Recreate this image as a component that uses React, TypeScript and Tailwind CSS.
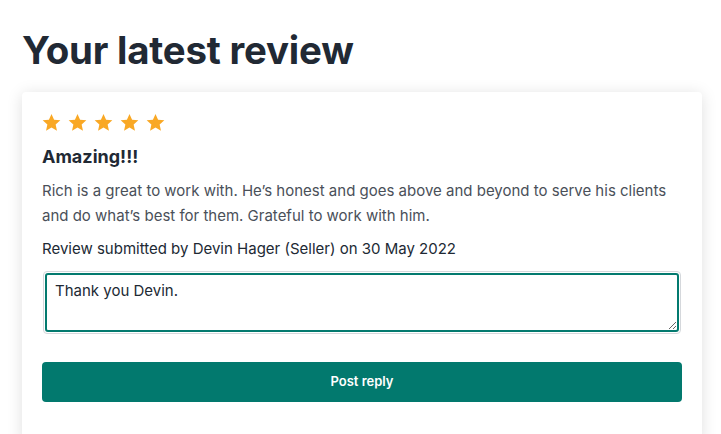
import React, { useState } from 'react';

const Star = () => (
  <svg viewBox="0 0 24 24" className="w-[21px] h-[21px]" fill="#f9a825">
    <path d="M12 2.2l2.95 6.55 7.15.72-5.37 4.8 1.52 7.03L12 17.7l-6.25 3.6 1.52-7.03-5.37-4.8 7.15-.72z" />
  </svg>
);

export default function App() {
  const [reply, setReply] = useState('Thank you Devin.');

  return (
    <div className="min-h-[434px] bg-white font-['Inter',sans-serif] text-[#212934] overflow-hidden">
      <h1 className="pl-[22px] pt-[27px] text-[38.4px] leading-[46px] font-bold tracking-[-0.2px]">
        Your latest review
      </h1>
      <div className="ml-[22px] mr-[19px] mt-[19px] bg-white rounded-[4px] shadow-[0_2px_16px_rgba(0,0,0,0.13)] px-[20px] pt-[20px] pb-[40px]">
        <div className="flex gap-[5px] -ml-[1px]">
          <Star />
          <Star />
          <Star />
          <Star />
          <Star />
        </div>
        <h2 className="mt-[12px] text-[18px] leading-[24px] font-bold">Amazing!!!</h2>
        <p className="mt-[9px] text-[15px] leading-[25px] text-[#4a5059]">
          Rich is a great to work with. He’s honest and goes above and beyond to serve his clients and do what’s best for them. Grateful to work with him.
        </p>
        <p className="mt-[8px] text-[15px] leading-[25px]">
          Review submitted by Devin Hager (Seller) on 30 May 2022
        </p>
        <div className="mt-[10px] mx-px rounded-[4px] border border-[#d5d8dc] p-px">
          <textarea
            value={reply}
            onChange={(e) => setReply(e.target.value)}
            className="block w-full h-[59px] rounded-[3px] border-2 border-[#037a6f] px-[8px] py-[5px] text-[15px] leading-[22px] text-[#212934] outline-none resize-y"
          />
        </div>
        <button className="mt-[28px] w-full h-[40px] rounded-[4px] bg-[#02796e] text-white text-[13px] font-semibold">
          Post reply
        </button>
      </div>
    </div>
  );
}
